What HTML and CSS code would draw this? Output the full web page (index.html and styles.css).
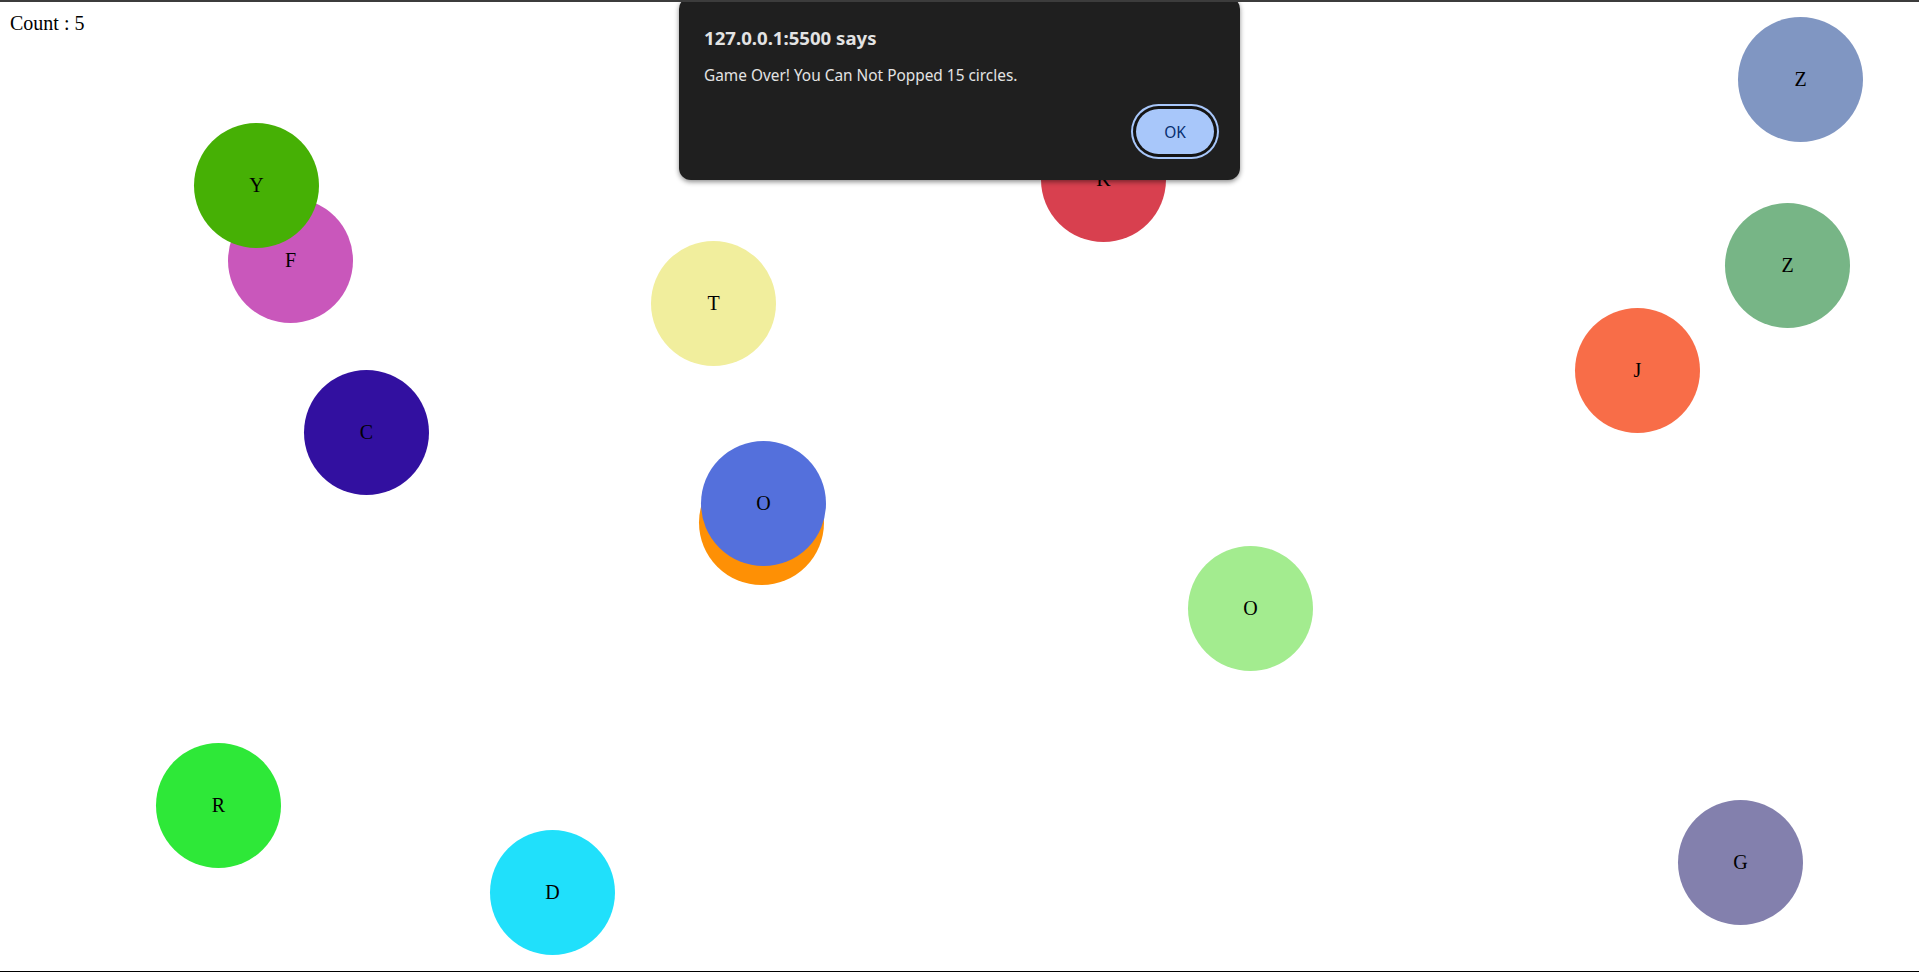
FILE: index.html
```html
<!DOCTYPE html>
<html lang="en">
<head>
<meta charset="UTF-8">
<title>Pop the circles</title>
<link rel="stylesheet" href="styles.css">
</head>
<body>
<main class="game">
  <div class="count">Count : 5</div>

  <div class="circle" style="left:1738px;top:17px;background:#8096c2">Z</div>
  <div class="circle" style="left:1725px;top:203px;background:#77b586">Z</div>
  <div class="circle" style="left:228px;top:198px;background:#c957bb">F</div>
  <div class="circle" style="left:194px;top:123px;background:#46b005">Y</div>
  <div class="circle" style="left:1041px;top:117px;background:#d8404f">K</div>
  <div class="circle" style="left:651px;top:241px;background:#f1ee9d">T</div>
  <div class="circle" style="left:304px;top:370px;background:#3210a0">C</div>
  <div class="circle" style="left:1575px;top:308px;background:#f86d48">J</div>
  <div class="circle" style="left:699px;top:460px;background:#fe9005"></div>
  <div class="circle" style="left:701px;top:441px;background:#5470dc">O</div>
  <div class="circle" style="left:1188px;top:546px;background:#a3ec8f">O</div>
  <div class="circle" style="left:156px;top:743px;background:#2ee838">R</div>
  <div class="circle" style="left:490px;top:830px;background:#20e0fb">D</div>
  <div class="circle" style="left:1678px;top:800px;background:#8380ad">G</div>

  <div class="dialog" role="alertdialog">
    <div class="dialog-title">127.0.0.1:5500 says</div>
    <div class="dialog-msg">Game Over! You Can Not Popped 15 circles.</div>
    <div class="dialog-actions">
      <button class="dialog-ok">OK</button>
    </div>
  </div>
</main>
</body>
</html>
```

FILE: styles.css
```css
html, body {
  margin: 0;
  padding: 0;
  background: #ffffff;
}

.game {
  position: relative;
  width: 1919px;
  height: 972px;
  box-sizing: border-box;
  border-top: 2px solid #3c3c3c;
  border-bottom: 1px solid #000000;
  overflow: hidden;
  font-family: "Liberation Serif", "Times New Roman", serif;
  font-size: 20px;
  color: #000;
}

.count {
  padding: 10px 0 0 10px;
  line-height: 23px;
}

.circle {
  position: absolute;
  width: 125px;
  height: 125px;
  border-radius: 50%;
  display: flex;
  align-items: center;
  justify-content: center;
  line-height: 23px;
  margin-top: -2px;
}

.dialog {
  position: absolute;
  left: 679px;
  top: -5px;
  width: 561px;
  box-sizing: border-box;
  padding: 29px 26px 26px 25px;
  background: #1f1f1f;
  border-radius: 12px;
  box-shadow: 0 2px 5px rgba(0, 0, 0, 0.45);
  display: flex;
  flex-direction: column;
  font-family: "Noto Sans", "Open Sans", sans-serif;
  color: #e3e3e3;
}

.dialog-title {
  font-size: 18.6px;
  font-weight: 700;
  line-height: 24px;
}

.dialog-msg {
  margin-top: 16px;
  font-size: 15.4px;
  line-height: 20px;
}

.dialog-actions {
  margin-top: 23px;
  display: flex;
  justify-content: flex-end;
}

.dialog-ok {
  width: 78px;
  height: 45px;
  border: none;
  border-radius: 23px;
  background: #a8c7fa;
  color: #062e6f;
  font-family: "Noto Sans", "Open Sans", sans-serif;
  font-size: 15.5px;
  padding: 0;
  box-shadow: 0 0 0 3px #141414, 0 0 0 5px #a8c7fa;
}
```
